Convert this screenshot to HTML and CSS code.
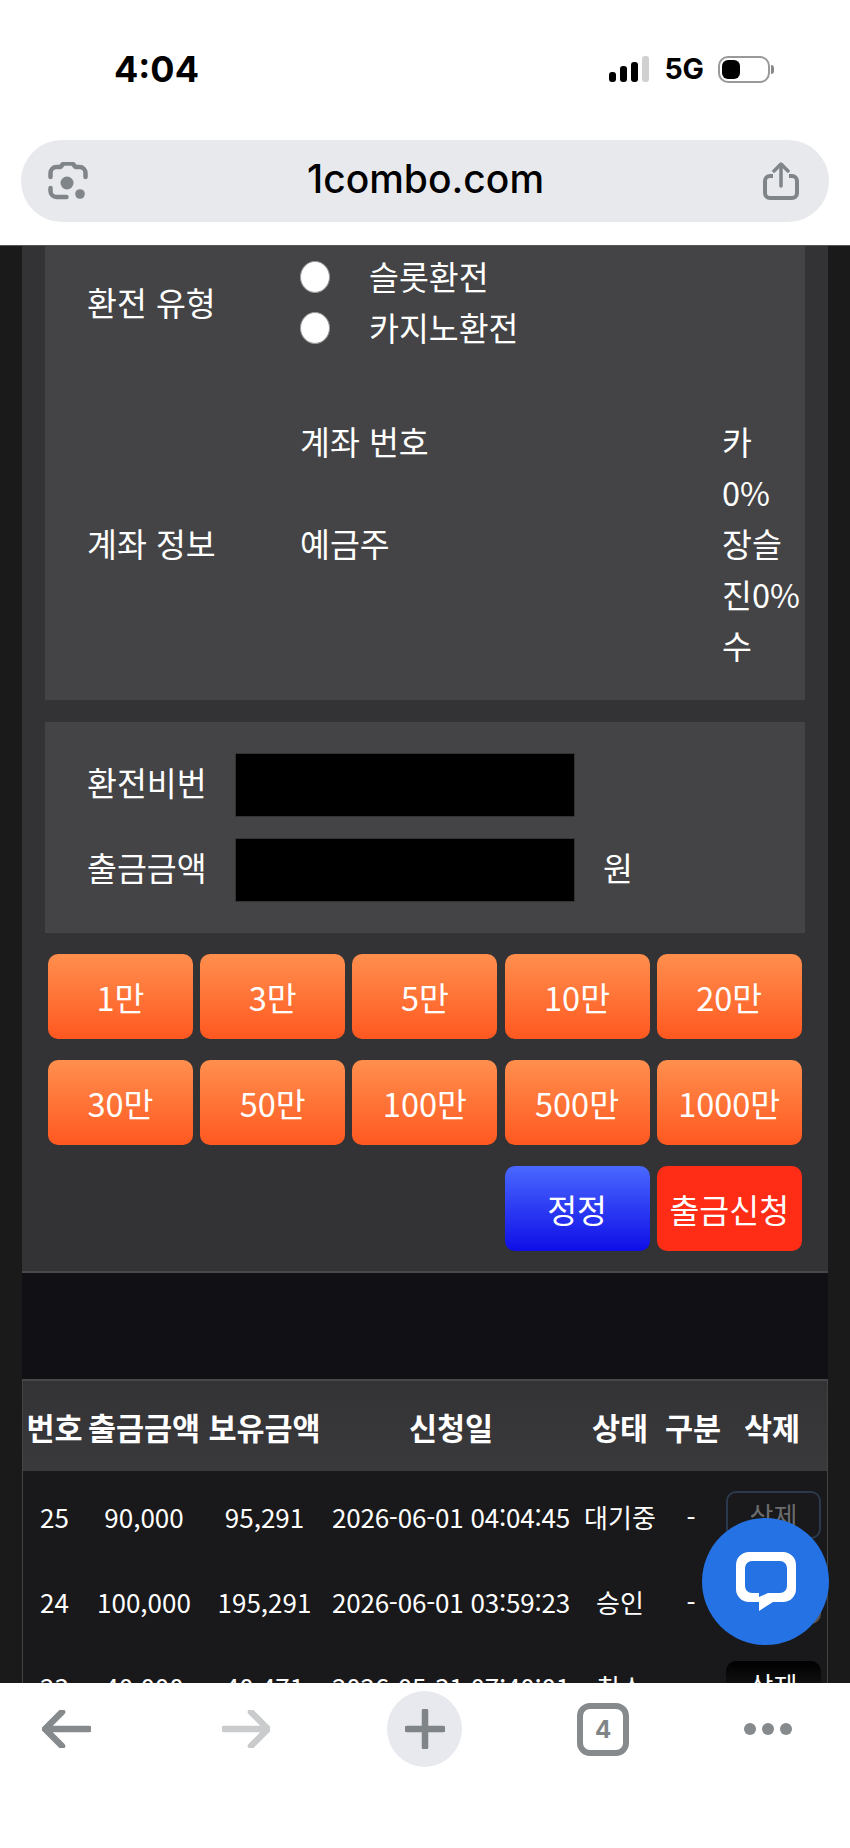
FILE: index.html
```html
<!DOCTYPE html>
<html lang="ko">
<head>
    <meta charset="UTF-8">
    <meta name="viewport" content="width=device-width, initial-scale=1.0">
    <title>1combo.com</title>
    <link rel="stylesheet" href="styles.css">
</head>
<body>
    <div class="phone">
        <header class="browser-top">
            <div class="status-bar">
                <span class="clock">4:04</span>
                <div class="status-right">
                    <div class="signal">
                        <i class="bar-1"></i><i class="bar-2"></i><i class="bar-3"></i><i class="bar-4"></i>
                    </div>
                    <span class="network">5G</span>
                    <div class="battery"><i></i></div>
                </div>
            </div>
            <div class="url-bar">
                <svg class="lens-icon" viewBox="0 0 40 38" width="40" height="38">
                    <path d="M2.500 15 V11 a6 6 0 0 1 6-6 h4 l3-3.500 h9 l3 3.500 h4 a6 6 0 0 1 6 6 v4" fill="none" stroke="#80858a" stroke-width="4.500" stroke-linecap="round" stroke-linejoin="round"/>
                    <path d="M2.500 26 v3 a6 6 0 0 0 6 6 h10" fill="none" stroke="#80858a" stroke-width="4.500" stroke-linecap="round"/>
                    <circle cx="19" cy="21" r="6.500" fill="#80858a"/>
                    <circle cx="32" cy="32" r="4.800" fill="#80858a"/>
                </svg>
                <span class="url-text">1combo.com</span>
                <svg class="share-icon" viewBox="0 0 36 38" width="36" height="38">
                    <path d="M10 14 H7 a5 5 0 0 0-5 5 v12 a5 5 0 0 0 5 5 h22 a5 5 0 0 0 5-5 V19 a5 5 0 0 0-5-5 h-3" fill="none" stroke="#80858a" stroke-width="4"/>
                    <path d="M18 24 V3 M11 9 L18 2 L25 9" fill="none" stroke="#80858a" stroke-width="3.500" stroke-linecap="round" stroke-linejoin="round"/>
                </svg>
            </div>
        </header>

        <main class="content">
            <div class="page-body">
                <section class="panel">
                    <div class="info-box">
                        <div class="info-row exchange-row">
                            <div class="info-label">환전 유형</div>
                            <div class="radio-list">
                                <label class="radio-item"><span class="radio-dot"></span>슬롯환전</label>
                                <label class="radio-item"><span class="radio-dot"></span>카지노환전</label>
                            </div>
                        </div>
                        <div class="info-row account-row">
                            <div class="info-label">계좌 정보</div>
                            <div class="account-fields">
                                <div>계좌 번호</div>
                                <div>예금주</div>
                            </div>
                            <div class="account-note">카<br>0%<br>장슬<br>진0%<br>수</div>
                        </div>
                    </div>

                    <div class="form-box">
                        <div class="form-row">
                            <label class="form-label">환전비번</label>
                            <input class="form-input" type="password">
                        </div>
                        <div class="form-row">
                            <label class="form-label">출금금액</label>
                            <input class="form-input" type="text">
                            <span class="unit">원</span>
                        </div>
                    </div>

                    <div class="amount-grid">
                        <button class="amount-btn">1만</button>
                        <button class="amount-btn">3만</button>
                        <button class="amount-btn">5만</button>
                        <button class="amount-btn">10만</button>
                        <button class="amount-btn">20만</button>
                        <button class="amount-btn">30만</button>
                        <button class="amount-btn">50만</button>
                        <button class="amount-btn">100만</button>
                        <button class="amount-btn">500만</button>
                        <button class="amount-btn">1000만</button>
                        <button class="amount-btn btn-reset">정정</button>
                        <button class="amount-btn btn-submit">출금신청</button>
                    </div>
                </section>

                <table class="history">
                    <thead>
                        <tr>
                            <th class="col-no">번호</th>
                            <th class="col-amount">출금금액</th>
                            <th class="col-balance">보유금액</th>
                            <th class="col-date">신청일</th>
                            <th class="col-state">상태</th>
                            <th class="col-type">구분</th>
                            <th class="col-del">삭제</th>
                        </tr>
                    </thead>
                    <tbody>
                        <tr>
                            <td>25</td><td>90,000</td><td>95,291</td><td class="date-cell">2026-06-01 04:04:45</td><td>대기중</td><td>-</td>
                            <td><button class="del-btn del-waiting">삭제</button></td>
                        </tr>
                        <tr>
                            <td>24</td><td>100,000</td><td>195,291</td><td class="date-cell">2026-06-01 03:59:23</td><td>승인</td><td>-</td>
                            <td><button class="del-btn del-approved">삭제</button></td>
                        </tr>
                        <tr>
                            <td>23</td><td>40,000</td><td>40,471</td><td class="date-cell">2026-05-31 07:40:01</td><td>취소</td><td>-</td>
                            <td><button class="del-btn del-cancelled">삭제</button></td>
                        </tr>
                    </tbody>
                </table>
            </div>
        </main>

        <nav class="bottom-bar">
            <svg class="nav-back" viewBox="0 0 49 38" width="49" height="38">
                <path d="M47 19 H4 M20 2 L3 19 L20 36" fill="none" stroke="#868a8c" stroke-width="6.500" stroke-linecap="round" stroke-linejoin="round"/>
            </svg>
            <svg class="nav-forward" viewBox="0 0 48 38" width="48" height="38">
                <path d="M2 19 H45 M29 2 L46 19 L29 36" fill="none" stroke="#c9cbcd" stroke-width="6.500" stroke-linecap="round" stroke-linejoin="round"/>
            </svg>
            <div class="nav-plus">
                <svg viewBox="0 0 40 40" width="40" height="40">
                    <path d="M20 2 V38 M2 20 H38" fill="none" stroke="#7f8487" stroke-width="6.500" stroke-linecap="round"/>
                </svg>
            </div>
            <div class="nav-tabs">4</div>
            <div class="nav-more"><i></i><i></i><i></i></div>
        </nav>

        <button class="chat-bubble">
            <svg viewBox="0 0 60 60" width="60" height="60">
                <path fill-rule="evenodd" fill="#fff" d="M13 0 H47 a13 13 0 0 1 13 13 V37 a13 13 0 0 1-13 13 H37 L23 59 V50 H13 a13 13 0 0 1-13-13 V13 a13 13 0 0 1 13-13 Z M16 9 a7 7 0 0 0-7 7 V34 a7 7 0 0 0 7 7 H23 V45 L32 41 H44 a7 7 0 0 0 7-7 V16 a7 7 0 0 0-7-7 Z"/>
            </svg>
        </button>
    </div>
</body>
</html>
```

FILE: styles.css
```css
* {
    margin: 0;
    padding: 0;
    box-sizing: border-box;
}

body {
    font-family: "Noto Sans CJK KR", "Noto Sans", sans-serif;
    background: #fff;
    color: #fff;
}

.phone {
    position: relative;
    width: 850px;
    height: 1848px;
    overflow: hidden;
    display: flex;
    flex-direction: column;
}

/* browser chrome, top */
.browser-top {
    height: 245px;
    background: #fff;
    padding: 0 21px;
}

.status-bar {
    height: 140px;
    display: flex;
    justify-content: space-between;
    padding: 51px 59px 0 93px;
    color: #000;
    font-family: Inter, sans-serif;
}

.clock {
    font-size: 36px;
    font-weight: 700;
    line-height: 36px;
}

.status-right {
    display: flex;
    align-items: flex-start;
    padding-top: 5px;
}

.signal {
    display: flex;
    align-items: flex-end;
    gap: 4px;
    height: 26px;
    margin-right: 15px;
}

.signal i {
    display: block;
    width: 7px;
    background: #000;
    border-radius: 3px;
}

.bar-1 { height: 10px; }
.bar-2 { height: 16px; }
.bar-3 { height: 20px; }
.signal .bar-4 { height: 26px; background: #d0d0d0; }

.network {
    font-size: 28.500px;
    font-weight: 700;
    line-height: 26px;
    margin-right: 14px;
}

.battery {
    position: relative;
    width: 52px;
    height: 27px;
    border: 2px solid #999;
    border-radius: 10px;
    padding: 2px;
}

.battery i {
    display: block;
    width: 18px;
    height: 19px;
    background: #000;
    border-radius: 6px;
}

.battery::after {
    content: "";
    position: absolute;
    right: -6px;
    top: 7px;
    width: 3px;
    height: 9px;
    background: #888;
    border-radius: 0 3px 3px 0;
}

.url-bar {
    height: 82px;
    background: #e8e9ed;
    border-radius: 41px;
    display: flex;
    align-items: center;
    justify-content: space-between;
    padding: 0 30px 0 27px;
}

.url-text {
    color: #000;
    font-family: Inter, sans-serif;
    font-size: 39px;
    font-weight: 500;
    padding-bottom: 6px;
}

/* page */
.content {
    height: 1438px;
    overflow: hidden;
    background: #1a1a1a;
    padding: 0 22px;
    border-top: 1px solid #555;
}

.page-body {
    height: 100%;
    background: #111014;
}

.panel {
    height: 1027px;
    background: #333234;
    border-bottom: 2px solid #48484a;
    padding: 0 23px;
}

.info-box {
    height: 454px;
    background: #444446;
    padding: 4px 42px 0;
    font-size: 32.500px;
    line-height: 51px;
}

.info-row {
    display: flex;
    align-items: center;
}

.info-label {
    width: 213px;
    flex-shrink: 0;
}

.exchange-row {
    margin-bottom: 63px;
}

.radio-item {
    display: flex;
    align-items: center;
}

.radio-dot {
    width: 30px;
    height: 32px;
    border-radius: 50%;
    background: #fff;
    border: 1px solid #999;
    margin: 2px 39px 0 0;
}

.account-fields {
    width: 422px;
    flex-shrink: 0;
    align-self: flex-start;
    display: flex;
    flex-direction: column;
    gap: 51px;
}

.account-note {
    flex-shrink: 0;
    white-space: nowrap;
}

.form-box {
    height: 211px;
    margin-top: 22px;
    background: #444446;
    padding: 31px 42px;
    display: flex;
    flex-direction: column;
    gap: 21px;
    font-size: 32.500px;
}

.form-row {
    display: flex;
    align-items: center;
    height: 64px;
}

.form-label {
    width: 148px;
    flex-shrink: 0;
    padding-bottom: 7px;
}

.form-input {
    width: 340px;
    height: 64px;
    background: #000;
    border: 1px solid #333;
}

.unit {
    margin-left: 28px;
    padding-bottom: 7px;
}

.amount-grid {
    display: grid;
    grid-template-columns: repeat(5, 145px);
    column-gap: 7.200px;
    row-gap: 21px;
    padding: 21px 3px 0;
}

.amount-btn {
    height: 85px;
    border: none;
    border-radius: 10px;
    color: #fff;
    font-family: inherit;
    font-size: 32.500px;
    background: linear-gradient(to bottom, #ff8f4e, #ff5820);
}

.btn-reset {
    grid-column: 4;
    background: linear-gradient(to bottom, #4a68ff, #0e0ee6);
}

.btn-submit {
    background: #ff2c16;
}

/* withdraw history */
.history {
    width: 806px;
    margin-top: 106px;
    table-layout: fixed;
    border-collapse: separate;
    border-spacing: 0;
    background: #19181a;
    border-left: 1px solid #444;
    border-right: 1px solid #444;
    border-top: 2px solid #48484a;
    font-size: 26px;
}

.history th {
    height: 93px;
    padding-top: 2px;
    font-size: 30.500px;
    font-weight: 700;
    white-space: nowrap;
    background: linear-gradient(to bottom, #333234, #3a393b);
    border-bottom: 3px solid #19181a;
}

.history td {
    height: 85px;
    text-align: center;
    white-space: nowrap;
    padding: 0;
}

.history .date-cell {
    letter-spacing: -0.200px;
}

.col-no { width: 63px; }
.col-amount { width: 116px; }
.col-balance { width: 125px; }
.col-date { width: 248px; }
.col-state { width: 90px; }
.col-type { width: 52px; }
.col-del { width: 110px; }

.del-btn {
    display: block;
    width: 95px;
    height: 48px;
    margin: 0 0 4px 9px;
    border-radius: 10px;
    font-family: inherit;
    font-size: 26px;
}

.del-waiting {
    background: transparent;
    border: 2px solid #2a3a4c;
    color: #6a6c70;
}

.del-approved {
    background: #5a5048;
    border: none;
    color: #fff;
}

.del-cancelled {
    background: linear-gradient(to bottom, #000, #222);
    border: none;
    color: #fff;
}

/* browser chrome, bottom */
.bottom-bar {
    height: 165px;
    background: #fff;
    display: flex;
    align-items: flex-start;
    gap: 115px;
    padding: 8px 0 0 42px;
}

.nav-back {
    margin: 19px 16px 0 0;
}

.nav-forward {
    margin: 19px 2px 0 0;
}

.nav-plus {
    width: 75px;
    height: 76px;
    border-radius: 50%;
    background: #e8e9ee;
    display: flex;
    align-items: center;
    justify-content: center;
}

.nav-tabs {
    width: 52px;
    height: 53px;
    margin-top: 12px;
    border: 6px solid #868a8c;
    border-radius: 13px;
    color: #7f8487;
    font-family: Inter, sans-serif;
    font-size: 24px;
    font-weight: 700;
    line-height: 41px;
    text-align: center;
}

.nav-more {
    display: flex;
    gap: 6px;
    margin-top: 32px;
}

.nav-more i {
    display: block;
    width: 12px;
    height: 12px;
    border-radius: 50%;
    background: #868a8c;
}

.chat-bubble {
    position: absolute;
    left: 702px;
    top: 1518px;
    width: 127px;
    height: 127px;
    border: none;
    border-radius: 50%;
    background: #2472e4;
    display: flex;
    align-items: center;
    justify-content: center;
}
```
